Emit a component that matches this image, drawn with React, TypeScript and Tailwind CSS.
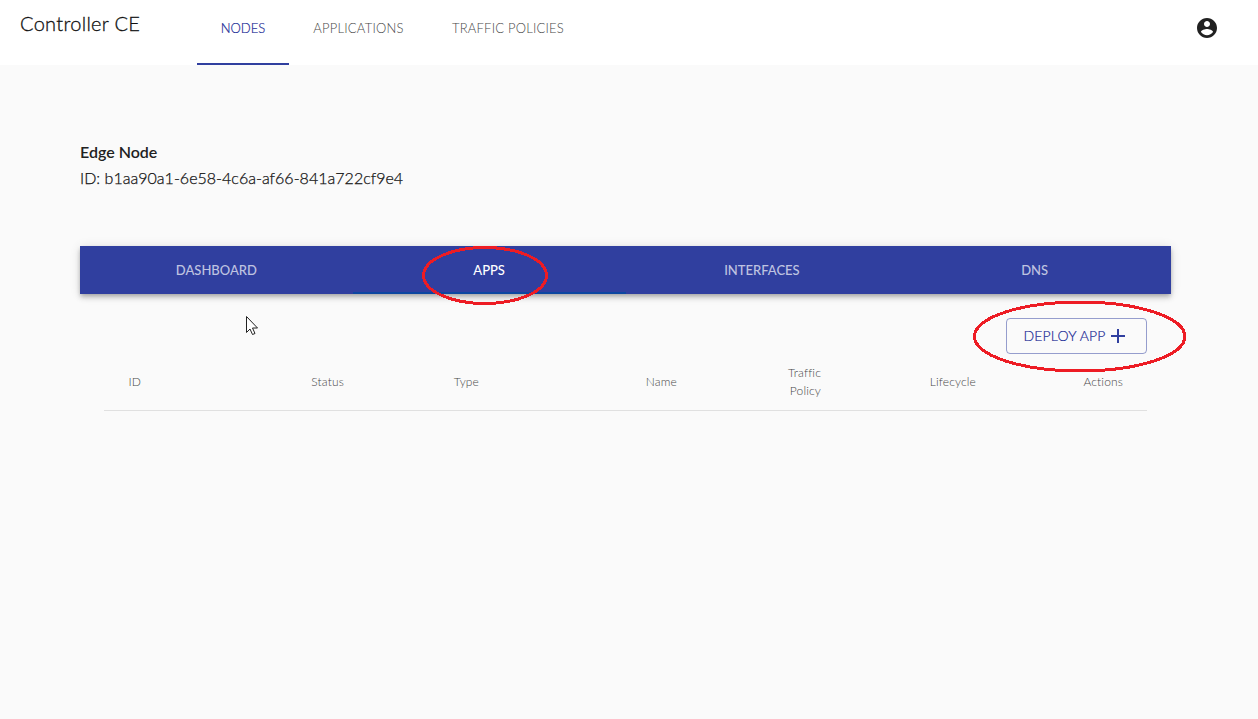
import React from "react";

const navItems = [
  { label: "NODES", active: true, box: "w-[92px]" },
  { label: "APPLICATIONS", active: false, box: "w-[139px]" },
  { label: "TRAFFIC POLICIES", active: false, box: "w-[160px]" },
];

const tabs = [
  { label: "DASHBOARD", active: false },
  { label: "APPS", active: true },
  { label: "INTERFACES", active: false },
  { label: "DNS", active: false },
];

const columns = ["ID", "Status", "Type", "Name", "Traffic Policy", "Lifecycle", "Actions"];

export default function App() {
  return (
    <div className="relative h-[719px] w-[1258px] overflow-hidden bg-[#fafafa] font-['Lato',sans-serif] text-[#212121]">
      <header className="flex h-[65px] bg-white">
        <h1 className="w-[197px] pl-5 pt-2 text-xl leading-[30px] font-light tracking-[0.3px] text-[#111] [-webkit-text-stroke:0.3px]">
          Controller CE
        </h1>
        <nav className="flex">
          {navItems.map((n) => (
            <a
              key={n.label}
              className={`flex justify-center border-b-2 pt-[18px] text-[13px] leading-5 font-light whitespace-nowrap ${n.box} ${
                n.active
                  ? "border-[#303f9f] text-[#1c2c96] [-webkit-text-stroke:0.2px]"
                  : "border-transparent tracking-[0.2px] text-[#484848]"
              }`}
            >
              {n.label}
            </a>
          ))}
        </nav>
        <button className="mt-4 mr-[39px] ml-auto size-6">
          <svg viewBox="0 0 24 24" className="size-6" fill="#212121">
            <path d="M12 2C6.48 2 2 6.48 2 12s4.48 10 10 10 10-4.48 10-10S17.52 2 12 2zm0 3c1.66 0 3 1.34 3 3s-1.34 3-3 3-3-1.34-3-3 1.34-3 3-3zm0 14.2c-2.5 0-4.71-1.28-6-3.22.03-1.99 4-3.08 6-3.08 1.99 0 5.97 1.09 6 3.08-1.29 1.94-3.5 3.22-6 3.22z" />
          </svg>
        </button>
      </header>

      <main className="pt-[74px] pr-[87px] pl-20">
        <h2 className="text-base leading-[26px] font-semibold">Edge Node</h2>
        <p className="text-base leading-[26px] font-light tracking-[0.02px] text-[#111] [-webkit-text-stroke:0.25px]">
          ID: b1aa90a1-6e58-4c6a-af66-841a722cf9e4
        </p>

        <div className="mt-[55px] grid h-12 grid-cols-4 bg-[#303f9f] shadow-[0px_2px_4px_-1px_rgba(0,0,0,0.2),0px_4px_5px_0px_rgba(0,0,0,0.14),0px_1px_10px_0px_rgba(0,0,0,0.12)]">
          {tabs.map((t) => (
            <div
              key={t.label}
              className={`flex items-center justify-center border-b-2 pt-[3px] text-[13px] font-medium ${
                t.active ? "border-[#0d47a1] text-white" : "border-transparent text-white/70"
              }`}
            >
              {t.label}
            </div>
          ))}
        </div>

        <section className="px-6 pt-6">
          <div className="flex justify-end">
            <button className="flex h-9 w-[141px] items-center rounded border border-[#303f9f]/50 pl-4 text-sm font-light text-[#303f9f]">
              <span className="w-[83px] tracking-[0.15px] whitespace-nowrap text-[#1c2c96] [-webkit-text-stroke:0.2px]">DEPLOY APP</span>
              <svg viewBox="0 0 24 24" className="size-6" fill="currentColor">
                <path d="M19 13h-6v6h-2v-6H5v-2h6V5h2v6h6v2z" />
              </svg>
            </button>
          </div>
          <div className="grid h-[57px] grid-cols-[37px_203px_135px_198px_144px_155px_147px] items-center border-b border-[#e0e0e0] text-right text-xs leading-[18px] font-light tracking-[0.15px] text-[#484848]">
            {columns.map((c) => (
              <div key={c} className="flex justify-end">
                <span className={c === "Traffic Policy" ? "w-10" : ""}>{c}</span>
              </div>
            ))}
          </div>
        </section>
      </main>

      <svg className="pointer-events-none absolute inset-0" width="1258" height="719" fill="none">
        <g stroke="#ed1c24" strokeWidth="3" shapeRendering="crispEdges">
          <ellipse cx="485" cy="275.5" rx="61.5" ry="28" />
          <ellipse cx="1079.7" cy="336.5" rx="105.2" ry="34.5" />
        </g>
        <path d="M246.5 316.5v16l3.5-3.5 2.5 5.5 2.5-1-2.5-5.5h5z" fill="#fff" stroke="#222" />
      </svg>
    </div>
  );
}
